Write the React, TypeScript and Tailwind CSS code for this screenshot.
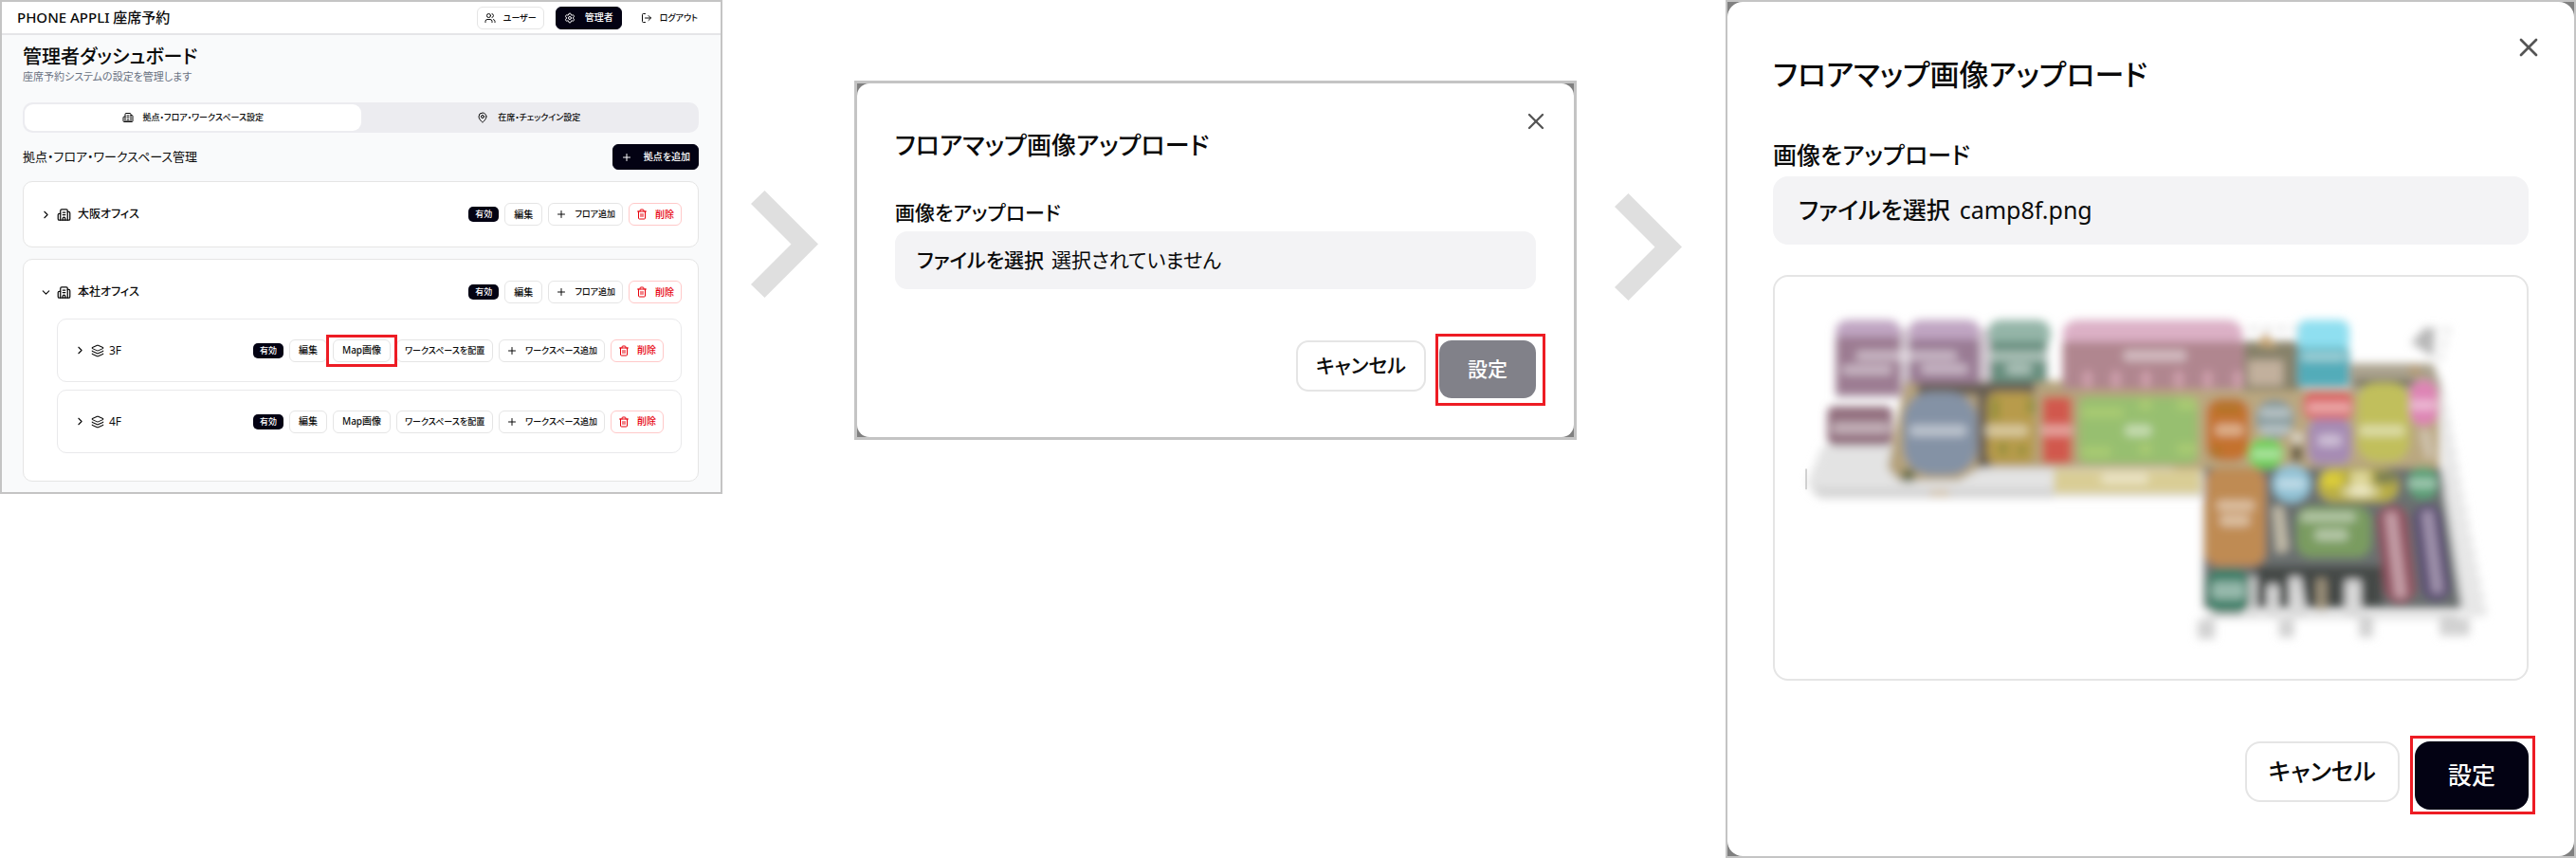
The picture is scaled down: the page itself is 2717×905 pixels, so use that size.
import { ReactNode } from 'react';
import clsx from 'clsx';
import {
  Building2,
  ChevronDown,
  ChevronRight,
  Layers,
  LogOut,
  MapPin,
  Plus,
  Settings,
  Trash2,
  Users,
  X,
} from 'lucide-react';

type Tone = 'outline' | 'dark' | 'danger' | 'ghost';

const tones: Record<Tone, string> = {
  outline: 'border-[#e5e5e5] bg-white text-[#0a0a0a]',
  dark: 'border-[#030213] bg-[#030213] text-white',
  danger: 'border-[#ffc9c9] bg-white text-[#e7000b]',
  ghost: 'border-transparent text-[#0a0a0a]',
};

interface SmallButtonProps {
  tone?: Tone;
  className?: string;
  children: ReactNode;
}

function SmallButton({ tone = 'outline', className = 'px-[9px] text-[10px]', children }: SmallButtonProps) {
  return (
    <button
      type="button"
      className={clsx(
        'flex min-h-6 shrink-0 items-center justify-center rounded-md border font-medium whitespace-nowrap',
        tones[tone],
        className,
      )}
    >
      {children}
    </button>
  );
}

function Highlight({ className, children }: { className: string; children: ReactNode }) {
  return (
    <div className="relative">
      {children}
      <span className={clsx('pointer-events-none absolute border-[3px] border-[#ed1c24]', className)} />
    </div>
  );
}

function StatusBadge() {
  return (
    <span className="flex h-4 items-center rounded-[5px] bg-[#030213] px-[7px] text-[9px] font-medium text-white">有効</span>
  );
}

function DeleteButton() {
  return (
    <SmallButton tone="danger" className="gap-2 px-[7px] text-[10px]">
      <Trash2 size={12} />
      削除
    </SmallButton>
  );
}

function OfficeHeader({ name, open }: { name: string; open?: boolean }) {
  const Chevron = open ? ChevronDown : ChevronRight;
  return (
    <div className="flex h-6 items-center justify-between">
      <div className="flex items-center">
        <Chevron size={13} className="mr-[5px]" />
        <Building2 size={15} className="mr-[7px]" />
        <h3 className="text-[12px] font-medium">{name}</h3>
      </div>
      <div className="flex items-center gap-[6px]">
        <StatusBadge />
        <SmallButton>編集</SmallButton>
        <SmallButton className="gap-2 px-[7px] text-[9px]">
          <Plus size={12} />
          フロア追加
        </SmallButton>
        <DeleteButton />
      </div>
    </div>
  );
}

function FloorRow({ name, highlighted }: { name: string; highlighted?: boolean }) {
  const mapButton = <SmallButton>Map画像</SmallButton>;
  return (
    <div className="flex h-[67px] items-center justify-between rounded-[10px] border border-[#e9e9eb] bg-white pr-[18px] pl-[17px]">
      <div className="flex items-center">
        <ChevronRight size={13} className="mr-[5px]" />
        <Layers size={14} strokeWidth={1.75} className="mr-[5px]" />
        <h4 className="text-[12px]">{name}</h4>
      </div>
      <div className="flex items-center gap-[6px]">
        <StatusBadge />
        <SmallButton>編集</SmallButton>
        {highlighted ? <Highlight className="-inset-x-[7px] -inset-y-[5px]">{mapButton}</Highlight> : mapButton}
        <SmallButton className="px-2 text-[9px]">ワークスペースを配置</SmallButton>
        <SmallButton className="gap-2 px-[7px] text-[9px]">
          <Plus size={12} />
          ワークスペース追加
        </SmallButton>
        <DeleteButton />
      </div>
    </div>
  );
}

function Dashboard() {
  return (
    <section className="min-w-0 border-2 border-[#c4c4c4] bg-[#f9fafb]">
      <header className="flex h-[35px] items-center justify-between border-b-2 border-[#e5e5e8] bg-white px-4">
        <h1 className="text-[15px] font-medium">PHONE APPLI 座席予約</h1>
        <nav className="flex items-center gap-3">
          <SmallButton className="gap-2 px-[7px] text-[9px]">
            <Users size={12} />
            ユーザー
          </SmallButton>
          <SmallButton tone="dark" className="gap-[10px] px-2 text-[10px]">
            <Settings size={12} />
            管理者
          </SmallButton>
          <SmallButton tone="ghost" className="gap-2 px-[7px] text-[9px]">
            <LogOut size={12} />
            ログアウト
          </SmallButton>
        </nav>
      </header>

      <main className="pt-[9px] pr-[23px] pb-[11px] pl-[22px]">
        <h2 className="text-[20px] leading-7 font-medium">管理者ダッシュボード</h2>
        <p className="text-[11px] leading-[14px] text-[#6a7282]">座席予約システムの設定を管理します</p>

        <div role="tablist" className="mt-5 grid h-8 grid-cols-2 rounded-[10px] bg-[#ececf0] p-[2px] text-[9px] font-medium">
          <button type="button" role="tab" aria-selected="true" className="flex items-center justify-center gap-[10px] rounded-[9px] bg-white">
            <Building2 size={12} />
            拠点・フロア・ワークスペース設定
          </button>
          <button type="button" role="tab" aria-selected="false" className="flex items-center justify-center gap-[10px] rounded-[9px]">
            <MapPin size={12} />
            在席・チェックイン設定
          </button>
        </div>

        <div className="mt-3 flex h-[27px] items-center justify-between">
          <h3 className="text-[13px]">拠点・フロア・ワークスペース管理</h3>
          <SmallButton tone="dark" className="h-[27px] gap-3 px-2 text-[10px]">
            <Plus size={12} />
            拠点を追加
          </SmallButton>
        </div>

        <div className="mt-3 flex flex-col gap-3">
          <div className="rounded-[10px] border border-[#e5e5e5] bg-white px-[17px] py-[22px]">
            <OfficeHeader name="大阪オフィス" />
          </div>
          <div className="rounded-[10px] border border-[#e5e5e5] bg-white px-[17px] pt-[22px] pb-[29px]">
            <OfficeHeader name="本社オフィス" open />
            <div className="mt-4 ml-[18px] flex flex-col gap-2">
              <FloorRow name="3F" highlighted />
              <FloorRow name="4F" />
            </div>
          </div>
        </div>
      </main>
    </section>
  );
}

function StepArrow() {
  return (
    <svg viewBox="0 0 71 113" className="w-[71px]" fill="#dfdfdf" aria-hidden="true">
      <path d="M14.5 0 71 56.5 14.5 113 0 99 42.5 56.5 0 14Z" />
    </svg>
  );
}

// Rooms of the uploaded floor map: x, y, width, height, corner radius, fill
const rooms: [number, number, number, number, number, string][] = [
  [232, 172, 205, 70, 40, '#c0a5c2'],
  [462, 172, 225, 70, 40, '#c0a5c2'],
  [232, 225, 205, 185, 6, '#9c7b92'],
  [462, 232, 225, 140, 6, '#9a7b94'],
  [205, 445, 205, 125, 20, '#93707f'],
  [712, 172, 198, 90, 40, '#94b5a8'],
  [718, 240, 180, 130, 6, '#688f7f'],
  [948, 172, 570, 90, 50, '#dcb0c6'],
  [948, 240, 575, 150, 4, '#b0868f'],
  [445, 400, 232, 262, 90, '#8492a5'],
  [710, 400, 150, 228, 30, '#b89b4b'],
  [885, 415, 92, 212, 15, '#d1584d'],
  [1000, 415, 375, 212, 25, '#97bf70'],
  [1403, 420, 135, 198, 45, '#c4722f'],
  [1560, 425, 118, 120, 55, '#83989b'],
  [1535, 548, 110, 94, 45, '#6fcf58'],
  [1690, 172, 165, 100, 30, '#8fdff0'],
  [1690, 260, 165, 125, 15, '#52acb9'],
  [1710, 400, 155, 85, 25, '#d96162'],
  [1725, 485, 135, 143, 35, '#a68bb4'],
  [1880, 370, 165, 250, 60, '#c1bf5c'],
  [2045, 362, 90, 145, 45, '#de85b5'],
  [1398, 640, 192, 310, 45, '#bf8b53'],
  [1612, 632, 120, 116, 58, '#91c2d6'],
  [1755, 642, 255, 105, 50, '#b9ae45'],
  [2042, 635, 92, 105, 45, '#5aa077'],
  [1688, 762, 235, 160, 45, '#7a9c61'],
  [1405, 958, 132, 145, 45, '#408069'],
];

// Room name plates, unreadable at this zoom: x, y, width, height
const plates: [number, number, number, number][] = [
  [295, 270, 320, 32],
  [250, 315, 160, 30],
  [500, 312, 150, 30],
  [220, 496, 180, 36],
  [712, 272, 190, 30],
  [770, 310, 80, 34],
  [1140, 268, 200, 34],
  [465, 504, 180, 36],
  [700, 504, 140, 36],
  [880, 504, 100, 34],
  [1145, 504, 85, 36],
  [1430, 502, 90, 36],
  [1070, 658, 150, 32],
  [1570, 452, 100, 28],
  [1570, 505, 100, 28],
  [1545, 582, 95, 28],
  [1700, 274, 145, 28],
  [1720, 432, 140, 34],
  [1755, 535, 75, 36],
  [1885, 505, 145, 34],
  [2045, 426, 85, 30],
  [1435, 742, 120, 34],
  [1445, 788, 95, 36],
  [1625, 675, 90, 30],
  [1830, 700, 120, 30],
  [2040, 675, 90, 28],
  [1745, 834, 105, 36],
  [1700, 780, 175, 30],
  [1420, 1000, 105, 55],
];

const desks = [1015, 1105, 1200, 1303, 1395, 1490];

function FloorMap() {
  return (
    <svg viewBox="39 36 2376 1270" className="block w-full" role="img" aria-label="camp8f.png">
      <defs>
        <filter id="map-blur" x="-5%" y="-5%" width="110%" height="110%">
          <feGaussianBlur stdDeviation="14" />
        </filter>
      </defs>
      <g filter="url(#map-blur)">
        <path d="M190 570H1400V735H190L140 690Z" fill="#e3e3e3" />
        <path d="M150 705H920V735H180Z" fill="#d3d3d3" />
        <path d="M230 200H900V420H230Z" fill="#d6cbd4" />
        <path d="M450 365H1400V640H690L620 680H430L395 640Z" fill="#b5a37d" />
        <path d="M490 368H860V405H720V640H680V410H490Z" fill="#675f55" />
        <path d="M1300 390H2140V650H1300Z" fill="#baa780" />
        <path d="M1520 240H1700V395H1520Z" fill="#87826b" />
        <path d="M1535 300H1645V380H1535Z" fill="#c2b09d" />
        <path d="M1565 250L1590 210L1625 262Z" fill="#c9a673" />
        <path d="M1855 310H2120L2150 400H1855Z" fill="#aaa28e" />
        <path d="M1870 360H2060V380H1870Z" fill="#706d5b" />
        <path d="M1395 640H2145L2215 1085H1395Z" fill="#6a7070" />
        <path d="M1560 950H1960V1075H1560Z" fill="#454847" />
        <path d="M920 645H1385V722H920Z" fill="#d9cd95" />
        <path d="M2140 320L2200 690L2285 1110H2215L2155 720Z" fill="#e7e7e7" />
        <path d="M2150 400L2285 1110" fill="none" stroke="#d6d6d6" strokeWidth="10" strokeDasharray="20 26" />
        <path d="M1540 200H1690M2110 200L2165 205L2140 300" fill="none" stroke="#dfdfdf" strokeWidth="16" strokeDasharray="24 20" />
        <path d="M2050 245L2095 195L2125 205L2120 290Z" fill="#b8b8b8" />
        <path d="M2040 340L2060 312L2090 350Z" fill="#b99a6c" />
        {rooms.map(([x, y, w, h, r, fill]) => (
          <rect key={`${x}-${y}`} x={x} y={y} width={w} height={h} rx={r} fill={fill} />
        ))}
        {desks.map((x) => (
          <rect key={x} x={x} y={335} width={24} height={50} fill="#d3a3b0" />
        ))}
        <path d="M1010 465H1140M1190 440H1230M1310 440H1370M1010 590H1100M1190 580H1230M1310 580H1370" stroke="#a9ca72" strokeWidth="34" />
        <path d="M735 420V490M850 420V470M760 560V600M820 570V600" stroke="#95913c" strokeWidth="26" />
        <path d="M1430 450H1510M1410 590H1450" stroke="#b3742c" strokeWidth="36" />
        <path d="M1770 655H1830V700H1770Z" fill="#dccd37" />
        <path d="M1860 650H1920V730H1860Z" fill="#ded79a" />
        <path d="M1935 650H2000V690H1935Z" fill="#7c8053" />
        <path d="M1612 762H1645L1662 900L1625 910Z" fill="#c2bba8" />
        <path d="M2075 520H2110L2125 610H2095Z" fill="#cec1ac" />
        <path d="M1672 570H1705V620H1672Z" fill="#615845" />
        <path d="M1675 530H1705V560H1675Z" fill="#ddd8cd" />
        <path d="M440 645H480V685H440Z" fill="#6b704c" />
        <path d="M530 708H590V730H530Z" fill="#d5c6b0" />
        <path d="M1990 805L2015 1020" stroke="#91505f" strokeWidth="96" strokeLinecap="round" />
        <path d="M2102 800L2128 1015" stroke="#5b4e73" strokeWidth="92" strokeLinecap="round" />
        <path d="M1985 780L2018 1050" stroke="#c6a0a9" strokeWidth="36" />
        <path d="M2100 775L2134 1035" stroke="#a395af" strokeWidth="34" />
        <path d="M1595 1010H1630V1110H1595ZM1665 985H1700L1720 1110H1665ZM1842 995H1890V1110H1842ZM1540 985H1560V1110H1540Z" fill="#dcdcdc" />
        <path d="M1752 990H1780V1090H1752Z" fill="#a3967e" />
        <path d="M1375 1120H1430V1180H1375ZM1632 1120H1680V1175H1632ZM1885 1115H1930V1175H1885ZM2140 1115H2235V1170H2140Z" fill="#d2d2d2" />
        <path d="M1400 1100H2200V1115H1400Z" fill="#d6d6d6" />
        {plates.map(([x, y, w, h]) => (
          <rect key={`${x}-${y}`} x={x} y={y} width={w} height={h} rx={14} fill="#fff" fillOpacity={0.45} />
        ))}
      </g>
      <path d="M138 643V708" stroke="#c9c9c9" strokeWidth="5" />
    </svg>
  );
}

function FilePicker({ id, fileName, className }: { id: string; fileName: string; className: string }) {
  return (
    <div className={clsx('flex items-center bg-[#f3f3f5] whitespace-nowrap', className)}>
      <label htmlFor={id} className="cursor-pointer font-medium">
        ファイルを選択
      </label>
      <input id={id} type="file" accept="image/*" className="sr-only" />
      <span>{fileName}</span>
    </div>
  );
}

function EmptyUploadDialog() {
  return (
    <section className="mt-[85px] min-w-0 border-[3px] border-[#c4c4c4] bg-[#808080]">
      <div role="dialog" aria-labelledby="empty-title" className="rounded-[13px] bg-white px-10 pt-[26px] pb-[41px] text-[21px]">
        <button type="button" aria-label="閉じる" className="ml-auto flex w-fit text-[#555]">
          <X size={28} className="-mr-[14px]" />
        </button>
        <h2 id="empty-title" className="-mt-1 text-[26px] leading-[30px] font-medium">フロアマップ画像アップロード</h2>
        <p className="mt-[39px] leading-[34px] font-medium">画像をアップロード</p>
        <FilePicker id="empty-file" fileName="選択されていません" className="mt-[3px] h-[61px] gap-2 rounded-[13px] px-[23px]" />
        <div className="mt-[54px] flex items-start justify-end gap-[14px] font-medium">
          <button type="button" className="h-[54px] rounded-[13px] border-2 border-[#e5e5e5] px-[19px]">
            キャンセル
          </button>
          <Highlight className="-top-[7px] -right-[10px] -bottom-2 -left-1">
            <button type="button" disabled className="h-[61px] rounded-[13px] bg-[#818189] px-[30px] text-white">
              設定
            </button>
          </Highlight>
        </div>
      </div>
    </section>
  );
}

function SelectedUploadDialog() {
  return (
    <section className="min-w-0 border-2 border-[#c4c4c4] bg-[#808080]">
      <div role="dialog" aria-labelledby="selected-title" className="rounded-2xl bg-white px-12 pt-8 pb-[49px] text-[25px]">
        <button type="button" aria-label="閉じる" className="ml-auto flex w-fit text-[#555]">
          <X size={32} className="-mr-4" />
        </button>
        <h2 id="selected-title" className="-mt-[6px] text-[31px] leading-[36px] font-medium">フロアマップ画像アップロード</h2>
        <p className="mt-[47px] leading-[40px] font-medium">画像をアップロード</p>
        <FilePicker id="selected-file" fileName="camp8f.png" className="mt-[3px] h-[72px] gap-[10px] rounded-2xl px-[27px]" />
        <div className="mt-8 rounded-2xl border-2 border-[#e5e5e5]">
          <FloorMap />
        </div>
        <div className="mt-[64px] flex items-start justify-end gap-4 font-medium">
          <button type="button" className="h-16 rounded-2xl border-2 border-[#e5e5e5] px-[23px]">
            キャンセル
          </button>
          <Highlight className="-top-[6px] -right-[7px] -bottom-[5px] -left-[5px]">
            <button type="button" className="h-[72px] rounded-2xl bg-[#030213] px-[35px] text-white">
              設定
            </button>
          </Highlight>
        </div>
      </div>
    </section>
  );
}

export default function App() {
  return (
    <div
      lang="ja"
      className="grid grid-cols-[762fr_139fr_762fr_157fr_897fr] items-start bg-white font-['Noto_Sans','Noto_Sans_CJK_JP',sans-serif] text-[#0a0a0a] [font-feature-settings:'palt']"
    >
      <Dashboard />
      <div className="pt-[201px] pl-[30px]">
        <StepArrow />
      </div>
      <EmptyUploadDialog />
      <div className="pt-[204px] pl-10">
        <StepArrow />
      </div>
      <SelectedUploadDialog />
    </div>
  );
}
